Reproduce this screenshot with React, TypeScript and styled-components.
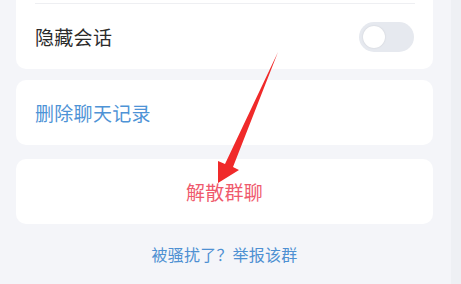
import React from "react";
import styled, { createGlobalStyle } from "styled-components";

const Global = createGlobalStyle`
  html, body { margin: 0; padding: 0; background: #f4f5f9; }
  body { font-family: "Noto Sans CJK SC", "Noto Sans", sans-serif; overflow: hidden; }
`;

const Page = styled.div`
  display: flex;
  width: 461px;
  height: 284px;
  position: relative;
`;

const Main = styled.div`
  flex: 1;
  display: flex;
  flex-direction: column;
  padding: 0 18px 0 16px;
`;

const Strip = styled.div`
  width: 10px;
  background: #eef0f4;
`;

const Card = styled.div<{ $top?: boolean; $mt?: number }>`
  background: #ffffff;
  border-radius: ${(p) => (p.$top ? "0 0 10px 10px" : "10px")};
  margin-top: ${(p) => p.$mt ?? 0}px;
  display: flex;
  flex-direction: column;
`;

const Divider = styled.div`
  height: 1px;
  background: #eeeff2;
  margin: 3px 18px 0 19px;
`;

const Row = styled.div<{ $center?: boolean; $h: number }>`
  height: ${(p) => p.$h}px;
  display: flex;
  align-items: center;
  justify-content: ${(p) => (p.$center ? "center" : "space-between")};
  padding: 0 19px 0 19px;
`;

const Label = styled.span<{ $color: string }>`
  font-size: 19px;
  color: ${(p) => p.$color};
  letter-spacing: 0.3px;
`;

const Toggle = styled.div`
  width: 55px;
  height: 30px;
  border-radius: 15px;
  background: #e6e9ef;
  display: flex;
  align-items: center;
  padding-left: 4px;
  box-sizing: border-box;
`;

const Knob = styled.div`
  width: 22px;
  height: 22px;
  border-radius: 50%;
  background: #ffffff;
  box-shadow: 0 0 2px rgba(0, 0, 0, 0.12);
`;

const Footer = styled.div`
  margin-top: 18px;
  text-align: center;
  font-size: 16px;
  color: #4e90d2;
  letter-spacing: 0.2px;
`;

const ArrowSvg = styled.svg`
  position: absolute;
  left: 0;
  top: 0;
  pointer-events: none;
`;

export default function App() {
  return (
    <>
      <Global />
      <Page>
        <Main>
          <Card $top>
            <Divider />
            <Row $h={65}>
              <Label $color="#2b2b2b">隐藏会话</Label>
              <Toggle>
                <Knob />
              </Toggle>
            </Row>
          </Card>
          <Card $mt={11}>
            <Row $h={65}>
              <Label $color="#4e93d6">删除聊天记录</Label>
            </Row>
          </Card>
          <Card $mt={14}>
            <Row $h={65} $center>
              <Label $color="#ef5a6d">解散群聊</Label>
            </Row>
          </Card>
          <Footer>被骚扰了？举报该群</Footer>
        </Main>
        <Strip />
        <ArrowSvg width="461" height="284" viewBox="0 0 461 284">
          <polygon
            points="278,52 233,167 239,170 218,183 218,161 225,164"
            fill="#f02a2a"
          />
        </ArrowSvg>
      </Page>
    </>
  );
}
